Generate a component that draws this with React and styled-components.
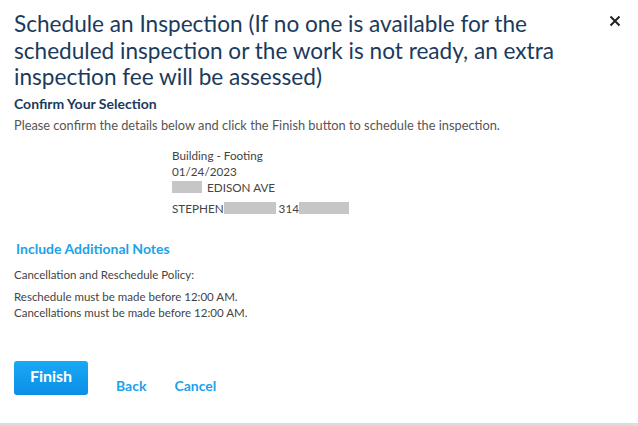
import React from "react";
import styled, { createGlobalStyle } from "styled-components";

const GlobalStyle = createGlobalStyle`
  html, body {
    margin: 0;
    padding: 0;
    background: #fff;
  }
  body {
    font-family: Lato, "Open Sans", "Liberation Sans", sans-serif;
    width: 638px;
    height: 426px;
    overflow: hidden;
  }
`;

const Dialog = styled.div`
  position: relative;
  box-sizing: border-box;
  width: 638px;
  height: 426px;
  padding: 11px 14px 0 14px;
  border-bottom: 3px solid #dcdcdc;
`;

const Close = styled.button`
  position: absolute;
  top: 15px;
  right: 17px;
  border: 0;
  background: none;
  padding: 0;
  width: 12px;
  height: 12px;
  cursor: pointer;
`;

const Title = styled.h1`
  margin: 0;
  width: 580px;
  font-size: 22.6px;
  line-height: 26.5px;
  font-weight: 400;
  color: #1b3a5c;
`;

const SubHead = styled.h2`
  margin: 4px 0 0;
  font-size: 14px;
  line-height: 18px;
  font-weight: 700;
  color: #1b3a5c;
`;

const Lead = styled.p`
  margin: 4px 0 0;
  font-size: 12.8px;
  line-height: 16px;
  color: #555;
`;

const Details = styled.div`
  display: flex;
  flex-direction: column;
  margin: 14px 0 0 158px;
  font-size: 11.7px;
  color: #444;
`;

const DetailLine = styled.div`
  display: flex;
  align-items: center;
  height: 16px;
  margin-top: ${(p) => p.gap || 0}px;
`;

const Redact = styled.span`
  display: inline-block;
  width: ${(p) => p.w}px;
  height: 12px;
  background: #c6c6c6;
  margin-right: ${(p) => p.mr || 0}px;
`;

const NotesLink = styled.a`
  display: block;
  margin: 24px 0 0 2px;
  font-size: 14px;
  line-height: 18px;
  font-weight: 700;
  color: #1aa3e8;
  text-decoration: none;
`;

const PolicyHead = styled.div`
  margin-top: 9px;
  font-size: 11.5px;
  line-height: 16px;
  color: #444;
`;

const PolicyText = styled.div`
  margin-top: 6px;
  font-size: 11.5px;
  line-height: 16px;
  color: #444;
`;

const Actions = styled.div`
  display: flex;
  align-items: flex-end;
  gap: 28px;
  margin-top: 40px;
`;

const FinishButton = styled.button`
  width: 74px;
  height: 34px;
  border: 0;
  border-radius: 3px;
  background: linear-gradient(#1aa8f5, #0a8fe6);
  color: #fff;
  font-family: inherit;
  font-size: 16px;
  font-weight: 700;
  padding: 0 0 4px;
  cursor: pointer;
`;

const TextButton = styled.a`
  font-size: 14px;
  font-weight: 700;
  color: #1aa3e8;
  text-decoration: none;
  line-height: 16px;
  margin-bottom: 1px;
`;

export default function App() {
  return (
    <>
      <GlobalStyle />
      <Dialog>
        <Close aria-label="Close">
          <svg width="12" height="12" viewBox="0 0 12 12">
            <path d="M1.5 1.5 L10.5 10.5 M10.5 1.5 L1.5 10.5" stroke="#222" strokeWidth="2" />
          </svg>
        </Close>
        <Title>
          Schedule an Inspection (If no one is available for the scheduled
          inspection or the work is not ready, an extra inspection fee will be
          assessed)
        </Title>
        <SubHead>Confirm Your Selection</SubHead>
        <Lead>
          Please confirm the details below and click the Finish button to
          schedule the inspection.
        </Lead>
        <Details>
          <DetailLine>Building - Footing</DetailLine>
          <DetailLine>01/24/2023</DetailLine>
          <DetailLine>
            <Redact w={30} mr={5} />
            EDISON AVE
          </DetailLine>
          <DetailLine gap={5}>
            STEPHEN
            <Redact w={52} mr={3} />
            314
            <Redact w={50} />
          </DetailLine>
        </Details>
        <NotesLink href="#">Include Additional Notes</NotesLink>
        <PolicyHead>Cancellation and Reschedule Policy:</PolicyHead>
        <PolicyText>
          Reschedule must be made before 12:00 AM.
          <br />
          Cancellations must be made before 12:00 AM.
        </PolicyText>
        <Actions>
          <FinishButton>Finish</FinishButton>
          <TextButton href="#">Back</TextButton>
          <TextButton href="#">Cancel</TextButton>
        </Actions>
      </Dialog>
    </>
  );
}
